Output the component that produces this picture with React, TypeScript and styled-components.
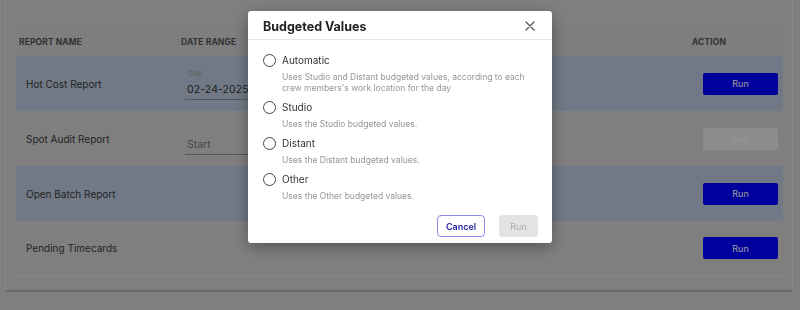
import React, { useState } from "react";
import styled, { createGlobalStyle } from "styled-components";

const GlobalStyle = createGlobalStyle`
  body {
    margin: 0;
    background: #cecece;
    font-family: Inter, "Noto Sans", sans-serif;
  }
`;

type Report = {
  name: string;
  label?: string;
  value?: string;
  placeholder?: string;
  highlight?: boolean;
  disabled?: boolean;
};

const reports: Report[] = [
  { name: "Hot Cost Report", label: "Day", value: "02-24-2025", highlight: true },
  { name: "Spot Audit Report", placeholder: "Start", disabled: true },
  { name: "Open Batch Report", highlight: true },
  { name: "Pending Timecards" },
];

const options = [
  {
    key: "auto",
    label: "Automatic",
    desc: "Uses Studio and Distant budgeted values, according to each crew members's work location for the day",
  },
  { key: "studio", label: "Studio", desc: "Uses the Studio budgeted values." },
  { key: "distant", label: "Distant", desc: "Uses the Distant budgeted values." },
  { key: "other", label: "Other", desc: "Uses the Other budgeted values." },
];

const Page = styled.div`
  padding: 0 7px 0 5px;
  height: 310px;
  box-sizing: border-box;
`;

const Card = styled.div`
  height: 292px;
  box-sizing: border-box;
  padding: 27px 9px 0 10px;
  border-left: 1px solid #dadada;
  border-right: 1px solid #dadada;
  border-bottom: 2px solid #aaaaaa;
`;

const Table = styled.div`
  display: grid;
  grid-template-columns: 162px 1fr 100px;
`;

const HeadCell = styled.div<{ $pad: number }>`
  height: 29px;
  display: flex;
  align-items: center;
  padding-left: ${(p) => p.$pad}px;
  background: #cbcbcb;
  font-size: 8.5px;
  font-weight: 700;
  color: #505050;
  text-transform: uppercase;
  letter-spacing: 0.1px;
`;

const Cell = styled.div<{ $hl?: boolean; $last?: boolean }>`
  height: 55px;
  box-sizing: border-box;
  display: flex;
  align-items: center;
  background: ${(p) => (p.$hl ? "#b6c4d8" : "transparent")};
  border-bottom: ${(p) => (p.$last ? "1px solid #dcdcdc" : "none")};
`;

const NameText = styled.span`
  padding-left: 10px;
  font-size: 10px;
  color: #383838;
`;

const Field = styled.div`
  width: 100px;
  margin-left: 7px;
  padding: 0 2px 1px;
  border-bottom: 1px solid #8a8a8a;
  display: flex;
  flex-direction: column;
  margin-top: 1px;
`;

const FieldLabel = styled.span`
  height: 10px;
  line-height: 10px;
  font-size: 7.5px;
  color: #9a9a9a;
  padding-left: 1px;
  margin-bottom: 3px;
`;

const FieldValue = styled.span<{ $ph?: boolean }>`
  height: 16px;
  line-height: 16px;
  font-size: 10.5px;
  letter-spacing: ${(p) => (p.$ph ? "0" : "0.1px")};
  color: ${(p) => (p.$ph ? "#727272" : "#333")};
`;

const RunButton = styled.button<{ $disabled?: boolean }>`
  margin-left: 20px;
  width: 75px;
  height: 22px;
  border: none;
  border-radius: 2px;
  font-family: inherit;
  font-size: 9px;
  background: ${(p) => (p.$disabled ? "#e2e2e2" : "#0000fe")};
  color: ${(p) => (p.$disabled ? "#f4f4f4" : "#ffffff")};
`;

const Backdrop = styled.div`
  position: fixed;
  inset: 0;
  background: rgba(0, 0, 0, 0.38);
  display: flex;
  justify-content: center;
  align-items: flex-start;
  padding-top: 11px;
`;

const Modal = styled.div`
  width: 304px;
  background: #fff;
  border-radius: 3px;
  box-shadow: 0 4px 16px rgba(0, 0, 0, 0.35);
`;

const ModalHead = styled.div`
  height: 29px;
  box-sizing: border-box;
  padding: 2px 17px 0 15px;
  display: flex;
  align-items: center;
  justify-content: space-between;
  border-bottom: 1px solid #e6e6e6;
`;

const Title = styled.h2`
  margin: 0;
  font-size: 12.5px;
  font-weight: 700;
  color: #222;
`;

const CloseButton = styled.button`
  border: none;
  background: none;
  padding: 0;
  width: 10px;
  height: 10px;
  display: flex;
`;

const ModalBody = styled.div`
  padding: 10px 15px 0;
`;

const Option = styled.label`
  display: block;
  margin-bottom: 3px;
  cursor: pointer;
`;

const OptionRow = styled.div`
  height: 20px;
  display: flex;
  align-items: center;
  gap: 6px;
`;

const Radio = styled.span<{ $on?: boolean }>`
  width: 13px;
  height: 13px;
  box-sizing: border-box;
  border-radius: 50%;
  border: 1.5px solid #444;
  background: #fff;
  box-shadow: ${(p) => (p.$on ? "inset 0 0 0 2.5px #fff, inset 0 0 0 10px #444" : "none")};
`;

const OptionLabel = styled.span`
  font-size: 10px;
  color: #333;
`;

const OptionDesc = styled.div`
  margin: 2px 0 0 19px;
  font-size: 8.5px;
  line-height: 11px;
  color: #959595;
`;

const ModalFoot = styled.div`
  display: flex;
  justify-content: flex-end;
  gap: 14px;
  padding: 10px 14px 6px;
`;

const FootButton = styled.button<{ $variant: "outline" | "disabled" }>`
  height: 22px;
  box-sizing: border-box;
  border-radius: 4px;
  font-family: inherit;
  font-size: 9px;
  padding: 0;
  width: ${(p) => (p.$variant === "outline" ? "48px" : "39px")};
  border: ${(p) => (p.$variant === "outline" ? "1px solid #8b8be8" : "none")};
  background: ${(p) => (p.$variant === "outline" ? "#fff" : "#e3e3e3")};
  color: ${(p) => (p.$variant === "outline" ? "#2323a8" : "#ababab")};
  font-weight: ${(p) => (p.$variant === "outline" ? 600 : 400)};
`;

const App = () => {
  const [choice, setChoice] = useState<string>("");

  return (
    <>
      <GlobalStyle />
      <Page>
        <Card>
          <Table>
            <HeadCell $pad={3}>Report Name</HeadCell>
            <HeadCell $pad={3}>Date Range</HeadCell>
            <HeadCell $pad={9}>Action</HeadCell>
            {reports.map((r, i) => {
              const last = i === reports.length - 1;
              return (
                <React.Fragment key={r.name}>
                  <Cell $hl={r.highlight} $last={last}>
                    <NameText>{r.name}</NameText>
                  </Cell>
                  <Cell $hl={r.highlight} $last={last}>
                    {(r.value || r.placeholder) && (
                      <Field>
                        <FieldLabel>{r.label}</FieldLabel>
                        <FieldValue $ph={!r.value}>{r.value || r.placeholder}</FieldValue>
                      </Field>
                    )}
                  </Cell>
                  <Cell $hl={r.highlight} $last={last}>
                    <RunButton $disabled={r.disabled}>Run</RunButton>
                  </Cell>
                </React.Fragment>
              );
            })}
          </Table>
        </Card>
      </Page>

      <Backdrop>
        <Modal>
          <ModalHead>
            <Title>Budgeted Values</Title>
            <CloseButton aria-label="close">
              <svg width="10" height="10" viewBox="0 0 10 10">
                <path d="M1 1 L9 9 M9 1 L1 9" stroke="#555" strokeWidth="1.3" strokeLinecap="round" />
              </svg>
            </CloseButton>
          </ModalHead>
          <ModalBody>
            {options.map((o) => (
              <Option key={o.key} onClick={() => setChoice(o.key)}>
                <OptionRow>
                  <Radio $on={choice === o.key} />
                  <OptionLabel>{o.label}</OptionLabel>
                </OptionRow>
                <OptionDesc>{o.desc}</OptionDesc>
              </Option>
            ))}
          </ModalBody>
          <ModalFoot>
            <FootButton $variant="outline">Cancel</FootButton>
            <FootButton $variant="disabled">Run</FootButton>
          </ModalFoot>
        </Modal>
      </Backdrop>
    </>
  );
};

export default App;
